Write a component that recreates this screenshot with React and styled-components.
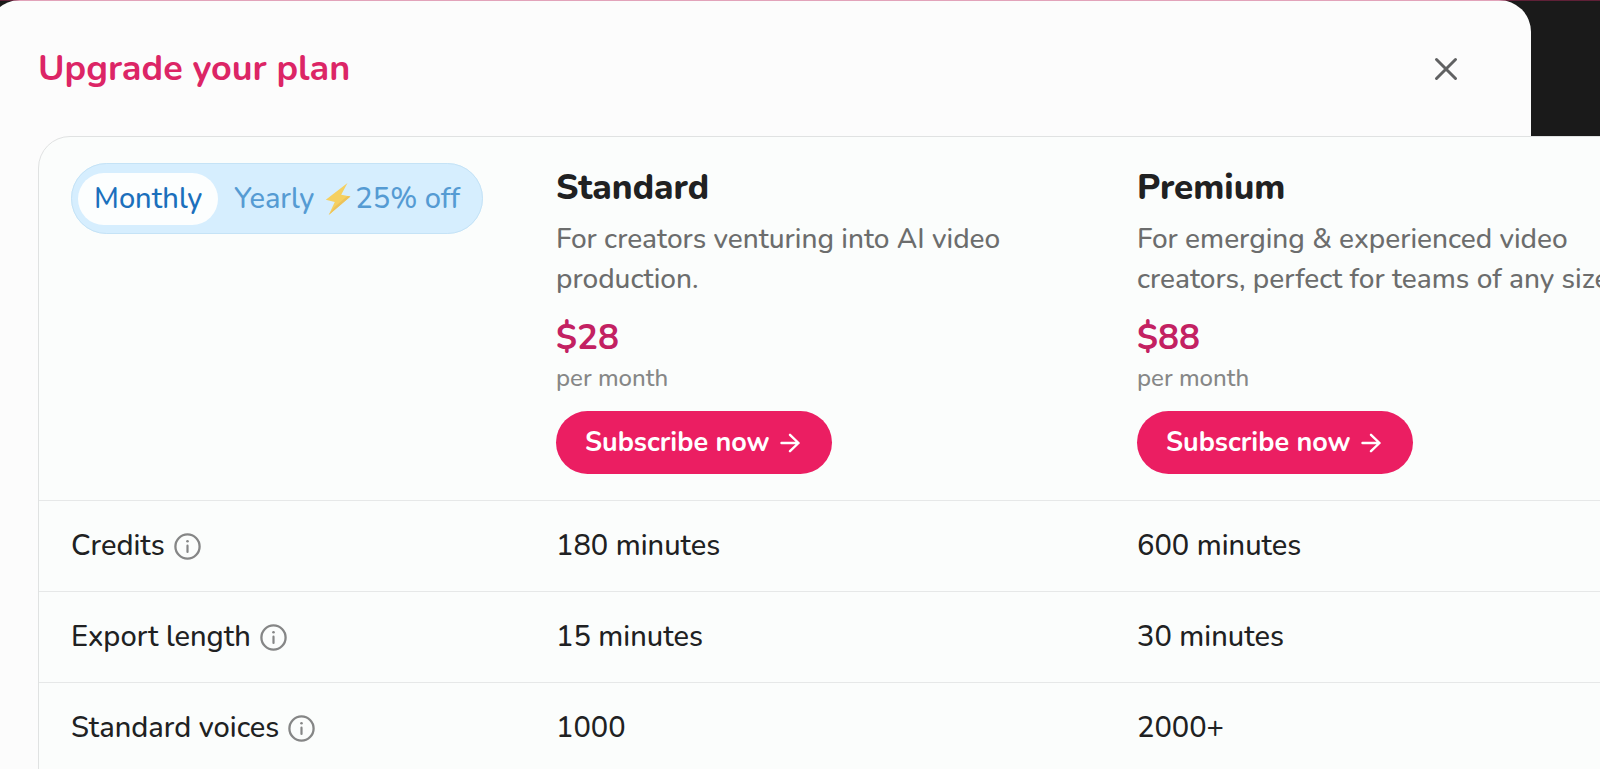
import React, { useState } from 'react';
import styled, { createGlobalStyle } from 'styled-components';

const GlobalStyle = createGlobalStyle`
  *, *::before, *::after { box-sizing: border-box; }
  body {
    margin: 0;
    background: #1a1a1a;
    color: #202122;
    font-family: Nunito, "Open Sans", "Noto Sans", sans-serif;
    font-size: 29px;
    line-height: 40px;
  }
  button { font: inherit; cursor: pointer; }
`;

const Page = styled.div`
  position: relative;
  height: 100vh;
  overflow: hidden;

  &::before {
    content: '';
    position: absolute;
    inset: 0 0 auto;
    height: 1px;
    background: rgba(190, 40, 95, 0.42);
    z-index: 1;
  }
`;

const Modal = styled.main`
  margin: 0 69px 0 -12px;
  padding: 0 0 40px 50px;
  min-height: 100vh;
  border-radius: 32px 32px 0 0;
  background: #fcfcfc;
`;

const Header = styled.header`
  display: flex;
  align-items: center;
  justify-content: space-between;
  height: 136px;
  padding: 2px 67px 0 0;
`;

const Title = styled.h1`
  margin: 0;
  color: #dc2566;
  font-size: 36px;
  font-weight: 700;
  line-height: 48px;
`;

const CloseButton = styled.button`
  display: grid;
  place-items: center;
  width: 36px;
  height: 36px;
  padding: 0;
  border: 0;
  background: none;
  color: #606162;
`;

const PlanCard = styled.div`
  width: calc(100% + 156px);
  padding-bottom: 40px;
  border: 1px solid #e0e2e2;
  border-radius: 32px;
  background: #fbfdfc;
`;

const PlanTable = styled.table`
  width: 100%;
  table-layout: fixed;
  border-collapse: separate;
  border-spacing: 0;
  text-align: left;
`;

const LabelCol = styled.col`
  width: 485px;
`;

const HeadCell = styled.th`
  padding: 26px 32px;
  vertical-align: top;
  font-weight: 400;
`;

const rowCell = `
  height: 91px;
  padding: 0 32px;
  border-top: 1px solid #e6e8e8;
  font-weight: 500;
`;

const LabelCell = styled.th`${rowCell}`;
const ValueCell = styled.td`${rowCell}`;

const LabelContent = styled.div`
  display: flex;
  align-items: center;
  gap: 9px;
`;

const InfoButton = styled.button`
  display: flex;
  padding: 0;
  border: 0;
  background: none;
  color: #858686;
`;

const Toggle = styled.fieldset`
  display: inline-flex;
  align-items: center;
  height: 71px;
  margin: 0;
  padding: 0 6px;
  border: 1px solid #c5e3f6;
  border-radius: 36px;
  background: #d6eefe;
`;

const ToggleOption = styled.label`
  display: flex;
  align-items: center;
  height: 52px;
  padding: 0 16px;
  border-radius: 26px;
  color: #559bd3;
  font-weight: 500;
  white-space: nowrap;
  cursor: pointer;

  &:has(input:checked) {
    background: #fcfefe;
    color: #1b70bc;
  }
  &:has(input:focus-visible) { outline: 2px solid #1b70bc; }
`;

const HiddenRadio = styled.input`
  position: absolute;
  opacity: 0;
  pointer-events: none;
`;

const Bolt = styled.svg`
  margin: 0 4px 0 11px;
`;

const PlanName = styled.h2`
  margin: 0 0 6px;
  font-size: 35px;
  font-weight: 800;
  line-height: 50px;
`;

const Description = styled.p`
  margin: 0;
  color: #6c6d6d;
  font-size: 28px;
  font-weight: 500;
`;

const Price = styled.p`
  margin: 16px 0 0;
  color: #c32162;
  font-size: 35px;
  font-weight: 700;
  line-height: 46px;
`;

const Period = styled.p`
  margin: 0 0 16px;
  color: #868787;
  font-size: 24px;
  font-weight: 500;
  line-height: 34px;
`;

const SubscribeButton = styled.button`
  display: inline-flex;
  align-items: center;
  gap: 10px;
  height: 63px;
  padding: 0 32px 0 29px;
  border: 0;
  border-radius: 32px;
  background: #eb1e62;
  color: #fff;
  font-size: 27px;
  font-weight: 700;
  white-space: nowrap;
`;

const plans = [
  { name: 'Standard', text: 'For creators venturing into AI video production.', price: '$28' },
  { name: 'Premium', text: 'For emerging & experienced video creators, perfect for teams of any size.', price: '$88' },
];

const features = [
  { label: 'Credits', values: ['180 minutes', '600 minutes'] },
  { label: 'Export length', values: ['15 minutes', '30 minutes'] },
  { label: 'Standard voices', values: ['1000', '2000+'] },
];

const CloseIcon = () => (
  <svg width="24" height="24" viewBox="0 0 24 24" fill="none" stroke="currentColor" strokeWidth="3" strokeLinecap="round" aria-hidden="true">
    <path d="M2.5 2.5 21.5 21.5M21.5 2.5 2.5 21.5" />
  </svg>
);

const InfoIcon = () => (
  <svg width="27" height="27" viewBox="0 0 27 27" fill="none" stroke="currentColor" aria-hidden="true">
    <circle cx="13.5" cy="13.5" r="12.1" strokeWidth="2.3" />
    <path d="M13.5 12.7V19" strokeWidth="2.2" strokeLinecap="round" />
    <circle cx="13.5" cy="8.2" r="1.3" fill="currentColor" stroke="none" />
  </svg>
);

const ArrowIcon = () => (
  <svg width="20" height="20" viewBox="0 0 20 20" fill="none" stroke="currentColor" strokeWidth="2.4" strokeLinecap="round" strokeLinejoin="round" aria-hidden="true">
    <path d="M1.5 10h17M10 1.8 18.5 10 10 18.2" />
  </svg>
);

const BoltIcon = () => (
  <Bolt width="26" height="34" viewBox="0 0 26 34" aria-hidden="true">
    <path d="M22.5 1 .8 17.8l9 2.2L3.7 33 25.4 14.6l-9.2-1.8z" fill="#f5d061" />
    <path d="M3.7 33 25.4 14.6l-2.9-.6L9.5 25z" fill="#ecc25a" />
  </Bolt>
);

function BillingToggle() {
  const [billing, setBilling] = useState('monthly');
  const radio = (value) => (
    <HiddenRadio
      type="radio"
      name="billing"
      value={value}
      checked={billing === value}
      onChange={() => setBilling(value)}
    />
  );
  return (
    <Toggle aria-label="Billing period">
      <ToggleOption>{radio('monthly')}Monthly</ToggleOption>
      <ToggleOption>{radio('yearly')}Yearly<BoltIcon />25% off</ToggleOption>
    </Toggle>
  );
}

export default function App() {
  return (
    <Page>
      <GlobalStyle />
      <Modal>
        <Header>
          <Title>Upgrade your plan</Title>
          <CloseButton type="button" aria-label="Close"><CloseIcon /></CloseButton>
        </Header>
        <PlanCard>
          <PlanTable>
            <colgroup>
              <LabelCol />
              <col />
              <col />
            </colgroup>
            <thead>
              <tr>
                <HeadCell><BillingToggle /></HeadCell>
                {plans.map((plan) => (
                  <HeadCell key={plan.name} scope="col">
                    <PlanName>{plan.name}</PlanName>
                    <Description>{plan.text}</Description>
                    <Price>{plan.price}</Price>
                    <Period>per month</Period>
                    <SubscribeButton type="button">Subscribe now <ArrowIcon /></SubscribeButton>
                  </HeadCell>
                ))}
              </tr>
            </thead>
            <tbody>
              {features.map((feature) => (
                <tr key={feature.label}>
                  <LabelCell scope="row">
                    <LabelContent>
                      {feature.label}
                      <InfoButton type="button" aria-label={`About ${feature.label}`}><InfoIcon /></InfoButton>
                    </LabelContent>
                  </LabelCell>
                  {feature.values.map((value) => <ValueCell key={value}>{value}</ValueCell>)}
                </tr>
              ))}
            </tbody>
          </PlanTable>
        </PlanCard>
      </Modal>
    </Page>
  );
}
